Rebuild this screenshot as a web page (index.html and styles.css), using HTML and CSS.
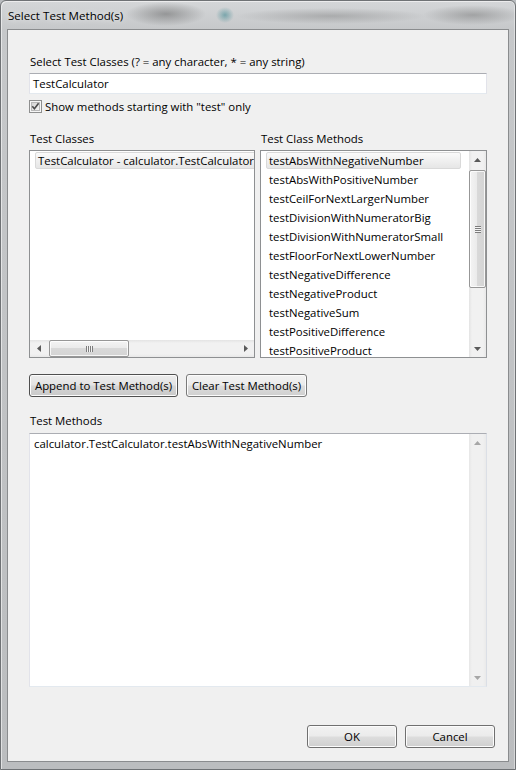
FILE: index.html
```html
<!DOCTYPE html>
<html lang="en">
<head>
<meta charset="utf-8">
<title>Select Test Method(s)</title>
<link rel="stylesheet" href="styles.css">
</head>
<body>
<div class="window">
  <div class="titlebar"><span class="title">Select Test Method(s)</span></div>
  <div class="client">
    <div class="label">Select Test Classes (? = any character, * = any string)</div>
    <div class="textbox">TestCalculator</div>
    <div class="check-row">
      <span class="checkbox">
        <svg width="13" height="13" viewBox="0 0 13 13">
          <defs>
            <linearGradient id="cbg" x1="0" y1="0" x2="1" y2="1">
              <stop offset="0" stop-color="#d2d2d2"/>
              <stop offset="1" stop-color="#f7f7f7"/>
            </linearGradient>
          </defs>
          <rect x="0.5" y="0.5" width="12" height="12" fill="#f6f6f6" stroke="#8e8f8f"/>
          <rect x="2.5" y="2.5" width="8" height="8" fill="url(#cbg)" stroke="#b8b8b8"/>
          <path d="M3.3 6.3 L5.4 8.8 L9.6 3.2" fill="none" stroke="#4a4a4a" stroke-width="1.6"/>
        </svg>
      </span>
      <span>Show methods starting with "test" only</span>
    </div>

    <div class="columns">
      <div class="col">
        <div class="label">Test Classes</div>
        <div class="list list-h">
          <div class="list-body">
            <div class="item selected">TestCalculator - calculator.TestCalculator</div>
          </div>
          <div class="hscroll">
            <span class="sb-btn-h">
              <svg width="4" height="7" viewBox="0 0 4 7"><path d="M4 0 L0 3.5 L4 7Z" fill="#5a5a5a"/></svg>
            </span>
            <span class="track-h">
              <span class="thumb-h"><span class="grip-h"></span></span>
            </span>
            <span class="sb-btn-h">
              <svg width="4" height="7" viewBox="0 0 4 7"><path d="M0 0 L4 3.5 L0 7Z" fill="#5a5a5a"/></svg>
            </span>
          </div>
        </div>
      </div>
      <div class="col">
        <div class="label">Test Class Methods</div>
        <div class="list list-v">
          <div class="list-body">
            <div class="item selected">testAbsWithNegativeNumber</div>
            <div class="item">testAbsWithPositiveNumber</div>
            <div class="item">testCeilForNextLargerNumber</div>
            <div class="item">testDivisionWithNumeratorBig</div>
            <div class="item">testDivisionWithNumeratorSmall</div>
            <div class="item">testFloorForNextLowerNumber</div>
            <div class="item">testNegativeDifference</div>
            <div class="item">testNegativeProduct</div>
            <div class="item">testNegativeSum</div>
            <div class="item">testPositiveDifference</div>
            <div class="item">testPositiveProduct</div>
          </div>
          <div class="vscroll">
            <span class="sb-btn-v">
              <svg width="7" height="4" viewBox="0 0 7 4"><path d="M0 4 L3.5 0 L7 4Z" fill="#5a5a5a"/></svg>
            </span>
            <span class="track-v">
              <span class="thumb-v"><span class="grip-v"></span></span>
            </span>
            <span class="sb-btn-v">
              <svg width="7" height="4" viewBox="0 0 7 4"><path d="M0 0 L3.5 4 L7 0Z" fill="#5a5a5a"/></svg>
            </span>
          </div>
        </div>
      </div>
    </div>

    <div class="actions">
      <button class="btn btn-append">Append to Test Method(s)</button>
      <button class="btn btn-clear">Clear Test Method(s)</button>
    </div>

    <div class="label label-methods">Test Methods</div>
    <div class="textarea">
      <div class="ta-body">calculator.TestCalculator.testAbsWithNegativeNumber</div>
      <div class="vscroll disabled">
        <span class="sb-btn-v">
          <svg width="7" height="4" viewBox="0 0 7 4"><path d="M0 4 L3.5 0 L7 4Z" fill="#a6a6a6"/></svg>
        </span>
        <span class="track-v"></span>
        <span class="sb-btn-v">
          <svg width="7" height="4" viewBox="0 0 7 4"><path d="M0 0 L3.5 4 L7 0Z" fill="#a6a6a6"/></svg>
        </span>
      </div>
    </div>

    <div class="footer">
      <button class="btn btn-dialog">OK</button>
      <button class="btn btn-dialog">Cancel</button>
    </div>
  </div>
</div>
</body>
</html>
```

FILE: styles.css
```css
* {
  box-sizing: border-box;
}

html,
body {
  margin: 0;
  padding: 0;
}

body {
  width: 516px;
  height: 770px;
  overflow: hidden;
  background: #b9bcbf;
  font-family: "Open Sans", "Noto Sans", sans-serif;
  font-size: 11.4px;
  color: #000;
}

.window {
  width: 516px;
  height: 770px;
  display: flex;
  flex-direction: column;
  padding: 0 6px 7px 6px;
  border: 1px solid #6f7275;
  border-radius: 6px 6px 0 0;
  background:
    radial-gradient(ellipse 40px 12px at 165px 13px, rgba(80, 80, 80, 0.45), rgba(80, 80, 80, 0)),
    radial-gradient(ellipse 9px 8px at 224px 14px, rgba(40, 125, 135, 0.5), rgba(40, 125, 135, 0)),
    radial-gradient(ellipse 95px 8px at 330px 15px, rgba(105, 105, 105, 0.35), rgba(105, 105, 105, 0)),
    radial-gradient(ellipse 50px 10px at 472px 14px, rgba(90, 90, 90, 0.38), rgba(90, 90, 90, 0)),
    linear-gradient(to bottom, #d4d6d8 0px, #c6c8ca 28px, #bbbdbf 100%);
  box-shadow: inset 1px 1px 0 rgba(255, 255, 255, 0.55), inset -1px 0 0 rgba(255, 255, 255, 0.4);
}

.titlebar {
  height: 28px;
  flex: none;
  display: flex;
  align-items: center;
  padding: 1px 0 0 1px;
}

.title {
  font-size: 11.6px;
  color: #000;
  text-shadow: 0 0 6px rgba(255, 255, 255, 0.9);
}

.client {
  flex: 1;
  display: flex;
  flex-direction: column;
  background: #f0f0f0;
  border: 1px solid #8a8c8e;
  padding: 24px 21px 13px 21px;
}

.label {
  height: 15px;
  line-height: 15px;
  white-space: nowrap;
  padding-left: 1px;
}

.textbox {
  margin-top: 4px;
  height: 21px;
  line-height: 19px;
  padding-left: 3px;
  background: #fff;
  border: 1px solid;
  border-color: #abadb3 #e2e3ea #e3e9ef #e2e3ea;
}

.check-row {
  margin-top: 6px;
  height: 13px;
  display: flex;
  align-items: center;
  gap: 3px;
  line-height: 13px;
}

.checkbox {
  width: 13px;
  height: 13px;
  display: block;
  flex: none;
}

.checkbox svg {
  display: block;
}

.columns {
  margin-top: 18px;
  display: grid;
  grid-template-columns: 226px 227px;
  column-gap: 5px;
}

.col {
  display: flex;
  flex-direction: column;
}

.list {
  margin-top: 4px;
  height: 208px;
  background: #fff;
  border: 1px solid #8e9092;
  display: flex;
  overflow: hidden;
}

.list-h {
  flex-direction: column;
}

.list-v {
  flex-direction: row;
}

.list-body {
  flex: 1;
  min-width: 0;
  min-height: 0;
  overflow: hidden;
  display: flex;
  flex-direction: column;
  align-items: flex-start;
}

.item {
  flex: none;
  height: 17px;
  line-height: 15px;
  margin: 1px 8px 1px 5px;
  padding-left: 2px;
  border: 1px solid transparent;
  border-radius: 2px;
  white-space: nowrap;
  align-self: stretch;
}

.list-h .item {
  align-self: flex-start;
  margin-right: 0;
  padding-right: 4px;
}

.item.selected {
  border-color: #d9d9d9;
  background: linear-gradient(to bottom, #fafafa, #e6e6e6);
}

/* horizontal scrollbar */
.hscroll {
  flex: none;
  height: 17px;
  display: flex;
  background: linear-gradient(to bottom, #e3e3e3 0, #f1f1f1 3px, #f1f1f1 14px, #e8e8e8 100%);
}

.sb-btn-h {
  width: 17px;
  flex: none;
  display: flex;
  align-items: center;
  justify-content: center;
}

.sb-btn-h svg,
.sb-btn-v svg {
  display: block;
}

.track-h {
  flex: 1;
  display: flex;
  align-items: stretch;
  padding: 0 2px;
}

.thumb-h {
  width: 80px;
  border: 1px solid #979797;
  border-radius: 2px;
  background: linear-gradient(to bottom, #f4f4f4 0%, #ebebeb 45%, #d9d9d9 50%, #d4d4d4 100%);
  box-shadow: inset 0 0 0 1px rgba(255, 255, 255, 0.8);
  display: flex;
  align-items: center;
  justify-content: center;
}

.grip-h {
  width: 7px;
  height: 6px;
  background: repeating-linear-gradient(to right, #7d7d7d 0, #7d7d7d 1px, #f4f4f4 1px, #f4f4f4 2px);
}

/* vertical scrollbar */
.vscroll {
  flex: none;
  width: 17px;
  display: flex;
  flex-direction: column;
  background: linear-gradient(to right, #e3e3e3 0, #f1f1f1 3px, #f1f1f1 14px, #e8e8e8 100%);
}

.sb-btn-v {
  height: 17px;
  flex: none;
  display: flex;
  align-items: center;
  justify-content: center;
}

.track-v {
  flex: 1;
  display: flex;
  flex-direction: column;
  padding-top: 2px;
}

.thumb-v {
  height: 118px;
  border: 1px solid #979797;
  border-radius: 2px;
  background: linear-gradient(to right, #f4f4f4 0%, #ebebeb 45%, #d9d9d9 50%, #d4d4d4 100%);
  box-shadow: inset 0 0 0 1px rgba(255, 255, 255, 0.8);
  display: flex;
  align-items: center;
  justify-content: center;
}

.grip-v {
  width: 6px;
  height: 7px;
  background: repeating-linear-gradient(to bottom, #7d7d7d 0, #7d7d7d 1px, #f4f4f4 1px, #f4f4f4 2px);
}

.vscroll.disabled {
  background: linear-gradient(to right, #e6e6e6 0, #f0f0f0 3px, #f0f0f0 14px, #eaeaea 100%);
}

/* buttons */
.actions {
  margin-top: 16px;
  display: flex;
  gap: 8px;
}

.btn {
  height: 23px;
  padding: 0;
  margin: 0;
  font-family: inherit;
  font-size: inherit;
  color: #000;
  border: 1px solid #707070;
  border-radius: 3px;
  background: linear-gradient(to bottom, #f2f2f2 0%, #ebebeb 48%, #dddddd 52%, #cfcfcf 100%);
  box-shadow: inset 0 0 0 1px #fcfcfc;
  display: flex;
  align-items: center;
  justify-content: center;
  white-space: nowrap;
}

.btn-append {
  width: 149px;
  border-color: #4f4f4f;
  background: linear-gradient(to bottom, #ececec 0%, #e3e3e3 48%, #d5d5d5 52%, #c9c9c9 100%);
}

.btn-clear {
  width: 121px;
  border-color: #7a7a7a;
}

.label-methods {
  margin-top: 16px;
}

.textarea {
  margin-top: 5px;
  height: 254px;
  display: flex;
  background: #fff;
  border: 1px solid;
  border-color: #abadb3 #dbdfe6 #e3e9ef #e2e3ea;
}

.ta-body {
  flex: 1;
  padding: 2px 0 0 4px;
  line-height: 15px;
  white-space: nowrap;
  overflow: hidden;
}

.footer {
  margin-top: 38px;
  margin-right: -8px;
  display: flex;
  justify-content: flex-end;
  gap: 8px;
}

.btn-dialog {
  width: 90px;
}
```
